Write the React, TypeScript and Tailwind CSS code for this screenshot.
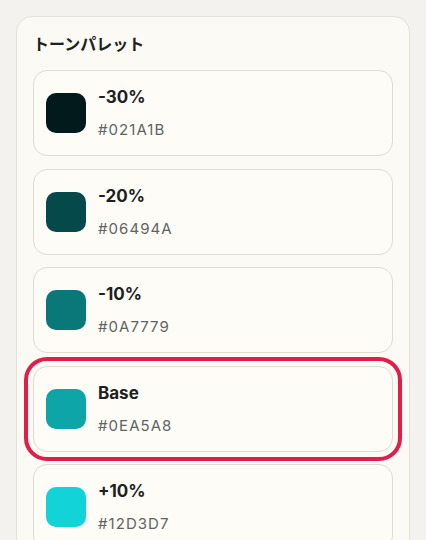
import React from "react";

const tones = [
  { label: "-30%", hex: "#021A1B" },
  { label: "-20%", hex: "#06494A" },
  { label: "-10%", hex: "#0A7779" },
  { label: "Base", hex: "#0EA5A8", active: true },
  { label: "+10%", hex: "#12D3D7" },
  { label: "+20%", hex: "#3EE9EC" },
  { label: "+30%", hex: "#6CEFF1" },
];

export default function App() {
  return (
    <div
      className="min-h-screen bg-[#f3f2ee] px-4 pt-4 pb-8"
      style={{ fontFamily: 'Inter, "Noto Sans CJK JP", sans-serif' }}
    >
      <div className="rounded-[16px] border border-[#e3e1d8] bg-[#fbfaf4] px-4 pt-[15px] pb-4">
        <h2 className="mb-[14px] text-[16px] font-bold leading-[24px] text-[#1c2221]">
          トーンパレット
        </h2>
        <div className="flex flex-col gap-[12.5px]">
          {tones.map((t) => (
            <div
              key={t.label}
              className={
                "flex h-[86px] items-center gap-3 rounded-[14px] border border-[#dedcd3] bg-[#fdfcf7] px-3 " +
                (t.active
                  ? "outline-[4.5px] outline-solid outline-[#e31c4a] outline-offset-[5px]"
                  : "")
              }
            >
              <div
                className="h-10 w-10 shrink-0 rounded-[10px]"
                style={{ backgroundColor: t.hex }}
              />
              <div className="flex flex-col">
                <span className="text-[17px] font-bold leading-[22px] text-[#1c2221]">
                  {t.label}
                </span>
                <span className="mt-3 text-[15px] leading-[20px] tracking-[0.07em] text-[#5f6463]">
                  {t.hex}
                </span>
              </div>
            </div>
          ))}
        </div>
      </div>
    </div>
  );
}
